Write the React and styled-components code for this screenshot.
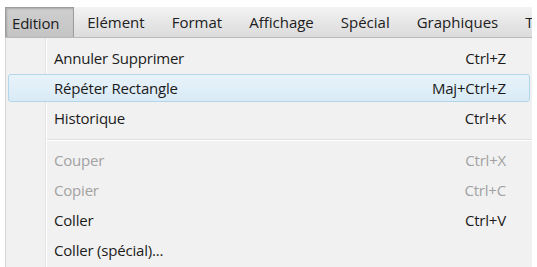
import React from 'react'
import styled, { createGlobalStyle } from 'styled-components'

const Global = createGlobalStyle`
    html, body {
        margin: 0;
        padding: 0;
        background: #ffffff;
        overflow: hidden;
    }
    body {
        font-family: "Open Sans", "Noto Sans", sans-serif;
        font-size: 15px;
        color: #1b1b1b;
    }
`

const barItems = ['Edition', 'Elément', 'Format', 'Affichage', 'Spécial', 'Graphiques', 'Texte']

const menuItems = [
    { label: 'Annuler Supprimer', shortcut: 'Ctrl+Z' },
    { label: 'Répéter Rectangle', shortcut: 'Maj+Ctrl+Z', active: true },
    { label: 'Historique', shortcut: 'Ctrl+K' },
    { separator: true },
    { label: 'Couper', shortcut: 'Ctrl+X', disabled: true },
    { label: 'Copier', shortcut: 'Ctrl+C', disabled: true },
    { label: 'Coller', shortcut: 'Ctrl+V' },
    { label: 'Coller (spécial)...', shortcut: '' },
]

function App() {
    return (
        <>
            <Global />
            <Window>
                <MenuBar>
                    {barItems.map((item, i) => (
                        <BarItem key={item} $open={i === 0}>{item}</BarItem>
                    ))}
                </MenuBar>
                <Dropdown>
                    {menuItems.map((item, i) =>
                        item.separator ? (
                            <Separator key={i} />
                        ) : (
                            <Row key={i} $active={item.active} $disabled={item.disabled}>
                                <Label>{item.label}</Label>
                                <Shortcut>{item.shortcut}</Shortcut>
                            </Row>
                        )
                    )}
                </Dropdown>
            </Window>
        </>
    )
}

export default App

const Window = styled.div`
    width: 527px;
    height: 260px;
    margin: 7px 0 0 5px;
    display: flex;
    flex-direction: column;
    overflow: hidden;
`

const MenuBar = styled.div`
    height: 30px;
    flex-shrink: 0;
    display: flex;
    align-items: stretch;
    background: linear-gradient(#f3f3f3, #e4e4e4 60%, #dcdcdc);
    border-bottom: 1px solid #b9b9b9;
    white-space: nowrap;
`

const BarItem = styled.div`
    display: flex;
    align-items: center;
    padding: 0 14px 0 13px;
    color: #202020;
    ${p => p.$open && `
        background: linear-gradient(#cfcfcf, #c4c4c4);
        border: 1px solid #9c9c9c;
        border-bottom: none;
        box-shadow: inset 1px 1px 2px rgba(0, 0, 0, 0.18);
        padding: 0 14px 0 6px;
        letter-spacing: -0.2px;
    `}
`

const Dropdown = styled.div`
    flex: 1;
    position: relative;
    background: #f1f1f1;
    border-left: 1px solid #d6d6d6;
    padding-top: 5px;
    display: flex;
    flex-direction: column;

    &::before {
        content: '';
        position: absolute;
        top: 0;
        bottom: 0;
        left: 39px;
        width: 1px;
        background: #e2e3e3;
        box-shadow: 1px 0 0 #ffffff;
    }
`

const Row = styled.div`
    position: relative;
    flex-shrink: 0;
    height: 26px;
    margin: 1px 2px;
    display: flex;
    align-items: center;
    justify-content: space-between;
    padding: 0 23px 0 45px;
    border: 1px solid transparent;
    border-radius: 3px;
    letter-spacing: -0.2px;
    color: ${p => (p.$disabled ? '#a2a2a2' : '#1b1b1b')};
    ${p => p.$active && `
        background: linear-gradient(#e8f2f9, #d9ebf6);
        border-color: #b1d6ec;
    `}
`

const Label = styled.span``

const Shortcut = styled.span``

const Separator = styled.div`
    flex-shrink: 0;
    height: 1px;
    margin: 6px 0 4px 40px;
    background: #e0e0e0;
    border-bottom: 1px solid #ffffff;
`
